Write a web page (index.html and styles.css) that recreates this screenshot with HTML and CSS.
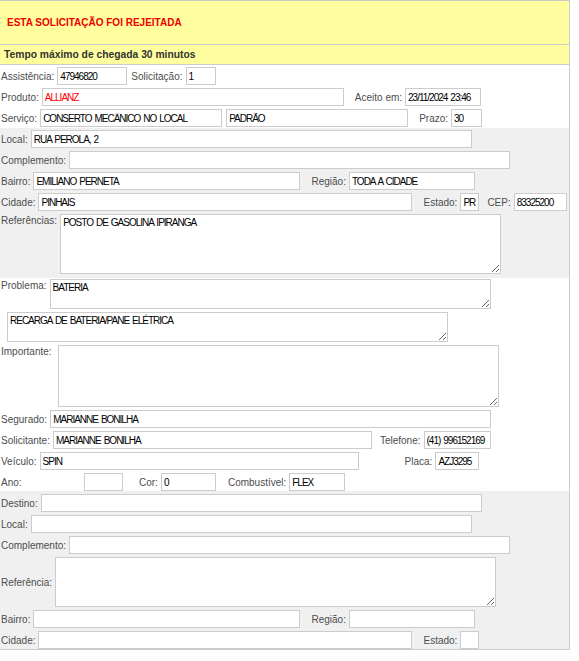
FILE: index.html
```html
<!DOCTYPE html>
<html lang="pt-BR">
<head>
  <meta charset="UTF-8">
  <title>Solicitação</title>
  <link rel="stylesheet" href="styles.css">
</head>
<body>
  <div class="painel">
    <div class="aviso">ESTA SOLICITAÇÃO FOI REJEITADA</div>
    <div class="tempo">Tempo máximo de chegada 30 minutos</div>

    <!-- dados da solicitacao -->
    <div class="secao">
      <div class="linha">
        <label>Assistência:</label><input class="w-70" value="47946820">
        <label class="sep-p">Solicitação:</label><input class="w-30" value="1">
      </div>
      <div class="linha">
        <label>Produto:</label><input class="w-302 destaque" value="ALLIANZ">
        <label class="sep">Aceito em:</label><input class="w-76" value="23/11/2024 23:46">
      </div>
      <div class="linha">
        <label>Serviço:</label><input class="w-182" value="CONSERTO MECÂNICO NO LOCAL">
        <input class="w-182 sep-p" value="PADRÃO">
        <label class="sep">Prazo:</label><input class="w-31" value="30">
      </div>
    </div>

    <!-- endereco de origem -->
    <div class="secao cinza origem">
      <div class="linha">
        <label>Local:</label><input class="w-441" value="RUA PEROLA, 2">
      </div>
      <div class="linha">
        <label>Complemento:</label><input class="w-441" value="">
      </div>
      <div class="linha">
        <label>Bairro:</label><input class="w-267" value="EMILIANO PERNETA">
        <label class="sep">Região:</label><input class="w-126" value="TODA A CIDADE">
      </div>
      <div class="linha">
        <label>Cidade:</label><input class="w-374" value="PINHAIS">
        <label class="sep">Estado:</label><input class="w-19" value="PR">
        <label class="sep-m">CEP:</label><input class="w-53" value="83325200">
      </div>
      <div class="linha topo">
        <label>Referências:</label><textarea class="w-441 h-60">POSTO DE GASOLINA IPIRANGA</textarea>
      </div>
    </div>

    <!-- problema e veiculo -->
    <div class="secao problema">
      <div class="linha topo">
        <label>Problema:</label><textarea class="w-441 h-30">BATERIA</textarea>
      </div>
      <div class="linha topo">
        <textarea class="w-441 h-30 recuo">RECARGA DE BATERIA/PANE ELÉTRICA</textarea>
      </div>
      <div class="linha topo">
        <label class="rot-imp">Importante:</label><textarea class="w-441 h-62"></textarea>
      </div>
      <div class="linha">
        <label>Segurado:</label><input class="w-441" value="MARIANNE BONILHA">
      </div>
      <div class="linha">
        <label>Solicitante:</label><input class="w-319" value="MARIANNE BONILHA">
        <label class="sep-m">Telefone:</label><input class="w-67" value="(41) 996152169">
      </div>
      <div class="linha">
        <label>Veículo:</label><input class="w-319" value="SPIN">
        <label class="sep-g">Placa:</label><input class="w-44" value="AZJ3295">
      </div>
      <div class="linha">
        <label class="rot-ano">Ano:</label><input class="w-39" value="">
        <label class="sep-cor">Cor:</label><input class="w-55" value="0">
        <label class="sep-comb">Combustível:</label><input class="w-56" value="FLEX">
      </div>
    </div>

    <!-- destino -->
    <div class="secao cinza destino">
      <div class="linha">
        <label>Destino:</label><input class="w-441" value="">
      </div>
      <div class="linha">
        <label>Local:</label><input class="w-441" value="">
      </div>
      <div class="linha">
        <label>Complemento:</label><input class="w-441" value="">
      </div>
      <div class="linha">
        <label>Referência:</label><textarea class="w-441 h-50"></textarea>
      </div>
      <div class="linha">
        <label>Bairro:</label><input class="w-267" value="">
        <label class="sep">Região:</label><input class="w-126" value="">
      </div>
      <div class="linha">
        <label>Cidade:</label><input class="w-374" value="">
        <label class="sep">Estado:</label><input class="w-19" value="">
      </div>
    </div>
  </div>
</body>
</html>
```

FILE: styles.css
```css
body {
  margin: 0;
  background-color: white;
  font-family: "Liberation Sans", Arial, sans-serif;
  font-size: 10px;
}

.painel {
  width: 569px;
  border-top: 1px solid #ccc;
  border-right: 1px solid #ccc;
  border-bottom: 1px solid #ccc;
}

.aviso {
  height: 43px;
  display: flex;
  align-items: center;
  padding-left: 7px;
  background-color: #ffffa0;
  border-bottom: 1px solid #ccc;
  color: #ee0000;
  font-weight: bold;
}

.tempo {
  height: 19px;
  display: flex;
  align-items: center;
  padding-left: 4px;
  background-color: #ffffa0;
  border-bottom: 1px solid #ccc;
  color: #333;
  font-weight: bold;
  font-size: 10.3px;
}

/* blocos do formulario */
.secao {
  display: flex;
  flex-direction: column;
  gap: 3px;
  padding: 2px 0 1px 1px;
}

.secao.cinza {
  background-color: #f0f0f0;
}

.secao.origem {
  padding-bottom: 4px;
}

.secao.problema {
  padding-top: 1px;
  padding-bottom: 0;
}

.secao.destino {
  padding-top: 3px;
  padding-bottom: 0;
}

.linha {
  display: flex;
  align-items: center;
}

.linha.topo {
  align-items: flex-start;
}

.linha label {
  color: #4d4d4d;
  margin-right: 3px;
  white-space: nowrap;
}

.linha.topo label {
  line-height: 14px;
}

.sep-p { margin-left: 4px; }
.sep-m { margin-left: 8px; }
.sep { margin-left: 11px; }
.sep-g { margin-left: 46px; }
.sep-cor { margin-left: 16px; }
.sep-comb { margin-left: 12px; }

.rot-ano {
  width: 80px;
}

.linha .rot-imp {
  margin-right: 6px;
}

input,
textarea {
  box-sizing: border-box;
  margin: 0;
  border: 1px solid #ccc;
  background-color: white;
  color: black;
  font-family: "Liberation Sans", Arial, sans-serif;
  font-size: 10px;
  letter-spacing: -1px;
  word-spacing: 1.2px;
  outline: none;
}

input {
  height: 18px;
  padding: 0 2px;
}

textarea {
  padding: 2px;
  resize: both;
}

.destaque {
  color: #ff0000;
}

.recuo {
  margin-left: 6px;
}

/* larguras dos campos */
.w-19 { width: 19px; }
.w-30 { width: 30px; }
.w-31 { width: 31px; }
.w-39 { width: 39px; }
.w-44 { width: 44px; }
.w-53 { width: 53px; }
.w-55 { width: 55px; }
.w-56 { width: 56px; }
.w-67 { width: 67px; }
.w-70 { width: 70px; }
.w-76 { width: 76px; }
.w-126 { width: 126px; }
.w-182 { width: 182px; }
.w-267 { width: 267px; }
.w-302 { width: 302px; }
.w-319 { width: 319px; }
.w-374 { width: 374px; }
.w-441 { width: 441px; }

.h-30 { height: 30px; }
.h-50 { height: 50px; }
.h-60 { height: 60px; }
.h-62 { height: 62px; }
```
